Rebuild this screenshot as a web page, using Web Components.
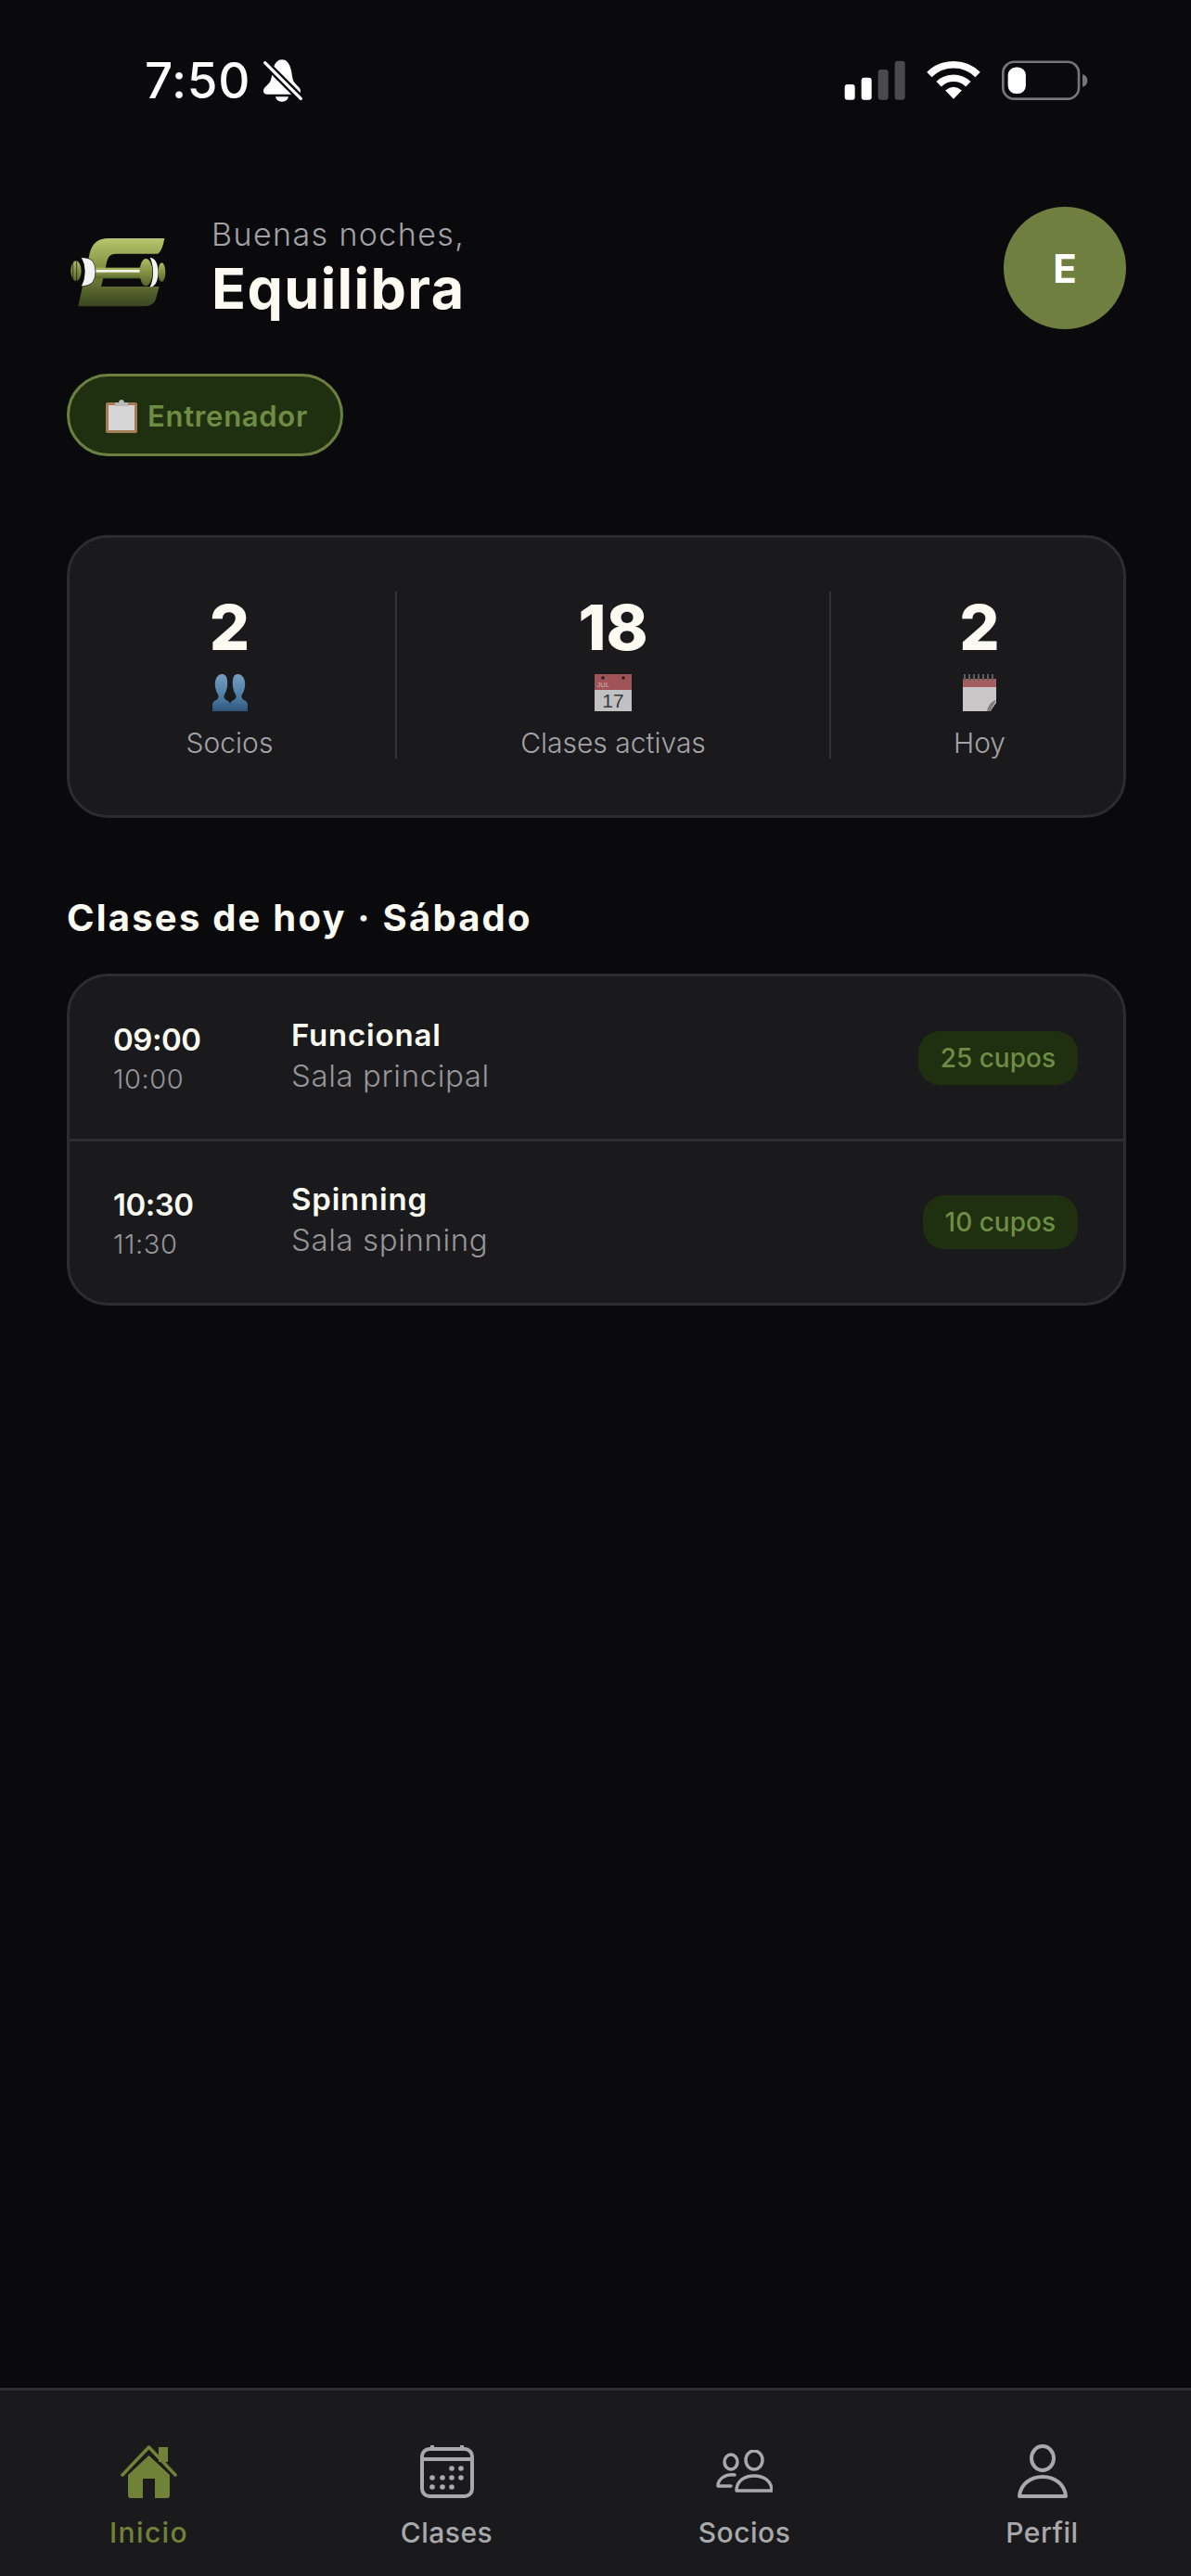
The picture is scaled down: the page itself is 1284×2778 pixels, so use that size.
<!DOCTYPE html>
<html lang="es">
<head>
<meta charset="utf-8">
<title>Equilibra</title>
<style>
    html, body { margin: 0; padding: 0; background: #0a0a0d; }
    body { font-family: Inter, "Liberation Sans", sans-serif; color: #fbfbf2; }
</style>
</head>
<body>
<app-shell>
    <status-bar></status-bar>
    <home-header>
        <span slot="greeting">Buenas noches,</span>
        <span slot="name">Equilibra</span>
        <span slot="initial">E</span>
    </home-header>
    <role-pill>Entrenador</role-pill>
    <stat-card>
        <stat-item icon="busts"><span slot="value">2</span><span slot="label">Socios</span></stat-item>
        <stat-item icon="calendar"><span slot="value">18</span><span slot="label">Clases activas</span></stat-item>
        <stat-item icon="notepad"><span slot="value">2</span><span slot="label">Hoy</span></stat-item>
    </stat-card>
    <section-title>Clases de hoy · Sábado</section-title>
    <class-list>
        <class-row>
            <span slot="start">09:00</span><span slot="end">10:00</span>
            <span slot="name">Funcional</span><span slot="room">Sala principal</span>
            <span slot="spots">25 cupos</span>
        </class-row>
        <class-row>
            <span slot="start">10:30</span><span slot="end">11:30</span>
            <span slot="name">Spinning</span><span slot="room">Sala spinning</span>
            <span slot="spots">10 cupos</span>
        </class-row>
    </class-list>
    <tab-bar>
        <tab-item icon="home" active>Inicio</tab-item>
        <tab-item icon="classes">Clases</tab-item>
        <tab-item icon="members">Socios</tab-item>
        <tab-item icon="profile">Perfil</tab-item>
    </tab-bar>
</app-shell>

<script>
const FONT = 'Inter, "Liberation Sans", sans-serif';

const statIcons = {
    busts: `<svg width="38" height="40" viewBox="0 0 38 40">
        <defs><linearGradient id="b" x1="0" y1="0" x2="0" y2="1"><stop offset="0" stop-color="#86b6dd"/><stop offset=".7" stop-color="#4f86b5"/><stop offset="1" stop-color="#325f88"/></linearGradient></defs>
        <path fill="url(#b)" d="M10.500 0C5.500 0 2.800 5 2.800 11c0 5 2 9 3.700 12 .3 3-1.500 4.500-3.500 5.500C1 29.500 0 31 0 33v7h19v-7c0-2-1-3.500-3-4.500-2-1-3.800-2.500-3.500-5.500 1.700-3 3.700-7 3.700-12C16.200 5 15.500 0 10.500 0z"/>
        <path fill="url(#b)" d="M27.500 0C22.500 0 21.800 5 21.800 11c0 5 2 9 3.700 12 .3 3-1.500 4.500-3.500 5.500-2 1-3 2.500-3 4.500v7h19v-7c0-2-1-3.500-3-4.500-2-1-3.800-2.500-3.500-5.500 1.700-3 3.700-7 3.700-12C35.200 5 32.500 0 27.500 0z"/>
    </svg>`,
    calendar: `<svg width="40" height="40" viewBox="0 0 40 40">
        <rect width="40" height="17" fill="#b85f63"/>
        <rect y="17" width="40" height="23" fill="#dfdfe0"/>
        <circle cx="9" cy="4" r="1.800" fill="#2a2020"/><circle cx="31" cy="4" r="1.800" fill="#2a2020"/>
        <text x="2.500" y="14" font-family="Liberation Sans, sans-serif" font-size="7.500" fill="#eec9c9">JUL</text>
        <text x="20" y="36" text-anchor="middle" font-family="Liberation Sans, sans-serif" font-size="21" fill="#3b3f45">17</text>
    </svg>`,
    notepad: `<svg width="36" height="40" viewBox="0 0 36 40">
        <rect y="5" width="36" height="9" fill="#bd6a6c"/>
        <path d="M0 14h36v17L29 40H0z" fill="#e8e6e6"/>
        <path d="M36 28 C31 29 27 34 26 40h4z" fill="#8f8f8f"/>
        <path d="M36 30 C33 33 31 36 30 40z" fill="#c9c9c9"/>
        <path d="M2 0v7M7 0v7M12 0v7M17 0v7M22 0v7M27 0v7M32 0v7" stroke="#6d6a6c" stroke-width="2"/>
    </svg>`,
};

const tabIcons = {
    home: `<svg width="61" height="58" viewBox="0 0 61 58">
        <rect x="41" y="3" width="10" height="16" fill="currentColor"/>
        <path d="M30.500 12 53 33v22a3 3 0 0 1-3 3H37V37H24v21H11a3 3 0 0 1-3-3V33z" fill="currentColor"/>
        <path d="M2 33 30.500 3 59 33" fill="none" stroke="currentColor" stroke-width="3.500" stroke-linecap="round" stroke-linejoin="round"/>
    </svg>`,
    classes: `<svg width="58" height="58" viewBox="0 0 58 58" fill="none" stroke="currentColor" stroke-width="4">
        <rect x="2" y="5" width="54" height="51" rx="8"/>
        <path d="M2 16h54M13 1v6M45 1v6"/>
        <g fill="currentColor" stroke="none">
            <circle cx="34" cy="26" r="2.800"/><circle cx="44" cy="26" r="2.800"/>
            <circle cx="13" cy="36" r="2.800"/><circle cx="24" cy="36" r="2.800"/><circle cx="34" cy="36" r="2.800"/><circle cx="44" cy="36" r="2.800"/>
            <circle cx="13" cy="46" r="2.800"/><circle cx="24" cy="46" r="2.800"/><circle cx="34" cy="46" r="2.800"/>
        </g>
    </svg>`,
    members: `<svg width="61" height="46" viewBox="0 0 61 46" fill="none" stroke="currentColor" stroke-width="3.500" stroke-linecap="round" stroke-linejoin="round">
        <ellipse cx="16" cy="13" rx="7" ry="8"/>
        <ellipse cx="41" cy="11" rx="9" ry="10"/>
        <path d="M22 44C22 33 31 28 41 28s19 5 19 16z"/>
        <path d="M20 27C10 26 2 31 2 39h14"/>
    </svg>`,
    profile: `<svg width="54" height="58" viewBox="0 0 54 58" fill="none" stroke="currentColor" stroke-width="4" stroke-linejoin="round">
        <ellipse cx="27" cy="15" rx="12" ry="13"/>
        <path d="M2 56C3 43 14 35 27 35s24 8 25 21z"/>
    </svg>`,
};

class AppShell extends HTMLElement {
    constructor() {
        super();
        this.attachShadow({ mode: 'open' }).innerHTML = `
            <style>
                :host { display: flex; flex-direction: column; height: 100vh; min-height: 2778px; box-sizing: border-box; font-family: ${FONT}; }
                ::slotted(tab-bar) { margin-top: auto; }
            </style>
            <slot></slot>`;
    }
}

class StatusBar extends HTMLElement {
    constructor() {
        super();
        this.attachShadow({ mode: 'open' }).innerHTML = `
            <style>
                :host { display: flex; align-items: center; justify-content: space-between; height: 172px; padding: 0 111px 0 156px; box-sizing: border-box; }
                .left, .right { display: flex; align-items: center; }
                .left { gap: 13px; }
                .right { gap: 23px; }
                .time { padding-top: 2px; font: 500 53px ${FONT}; color: #fff; line-height: 1; letter-spacing: .6px; }
                svg { display: block; }
            </style>
            <div class="left">
                <span class="time">7:50</span>
                <svg width="45" height="47" viewBox="482 100 135 141">
                    <path fill="#fff" d="M545 104c-14 0-21 10-26 22-8 20-5 38-14 52-6 9-20 15-20 28 0 7 5 10 12 10h96c7 0 12-3 12-10 0-13-14-19-20-28-9-14-6-32-14-52-5-12-12-22-26-22z"/>
                    <path fill="#fff" d="M524 224h42c-2 10-10 16-21 16s-19-6-21-16z"/>
                    <path d="M484 108l128 128" stroke="#0a0a0d" stroke-width="24"/>
                    <path d="M490 114l116 116" stroke="#fff" stroke-width="10" stroke-linecap="round"/>
                </svg>
            </div>
            <div class="right">
                <svg width="66" height="43" viewBox="95 72 198 129">
                    <rect x="97" y="150" width="33" height="50" rx="9" fill="#fff"/>
                    <rect x="151" y="128" width="33" height="72" rx="9" fill="#fff"/>
                    <rect x="205" y="102" width="33" height="98" rx="9" fill="#4a4a4c"/>
                    <rect x="259" y="74" width="33" height="126" rx="9" fill="#4a4a4c"/>
                </svg>
                <svg width="58" height="42" viewBox="358 74 174 127">
                    <path d="M366 121A112 112 0 0 1 524 121" fill="none" stroke="#fff" stroke-width="23"/>
                    <path d="M397 152A68 68 0 0 1 493 152" fill="none" stroke="#fff" stroke-width="23"/>
                    <path d="M445 200 418 172Q445 150 472 172Z" fill="#fff"/>
                </svg>
                <svg width="93" height="43" viewBox="600 72 280 129">
                    <rect x="604" y="77" width="246" height="120" rx="36" fill="none" stroke="#767678" stroke-width="8"/>
                    <rect x="620" y="94" width="58" height="86" rx="26" fill="#fff"/>
                    <path d="M862 118c10 2 16 10 16 20s-6 18-16 20z" fill="#767678"/>
                </svg>
            </div>`;
    }
}

class HomeHeader extends HTMLElement {
    constructor() {
        super();
        this.attachShadow({ mode: 'open' }).innerHTML = `
            <style>
                :host { display: flex; align-items: center; justify-content: space-between; margin-top: 51px; padding: 0 70px 0 76px; box-sizing: border-box; }
                .who { display: flex; align-items: center; gap: 49px; }
                .logo { display: block; margin-top: 10px; }
                .txt { display: flex; flex-direction: column; }
                .greeting { font-size: 34px; font-weight: 300; line-height: 44px; color: #a3a3a7; letter-spacing: 1.4px; }
                .name { font-size: 61px; font-weight: 700; line-height: 72px; color: #fbfbf2; letter-spacing: 1.4px; }
                .avatar { width: 132px; height: 132px; border-radius: 50%; background: #6f7f3f; display: flex; align-items: center; justify-content: center; font-size: 42px; font-weight: 700; color: #fff; }
            </style>
            <div class="who">
                <svg class="logo" width="103" height="74" viewBox="50 50 310 222">
                    <defs>
                        <linearGradient id="e" x1="0" y1="0" x2="0" y2="1"><stop offset="0" stop-color="#b8c56e"/><stop offset=".45" stop-color="#7e8f40"/><stop offset="1" stop-color="#39451f"/></linearGradient>
                        <linearGradient id="p" x1="0" y1="0" x2="0" y2="1"><stop offset="0" stop-color="#aebb5e"/><stop offset="1" stop-color="#55662c"/></linearGradient>
                    </defs>
                    <path fill="url(#e)" d="M355 50H172Q126 50 113 95L75 270H293Q318 270 326 250L338 206H150L168 125Q173 100 197 100H333Q348 92 355 50Z"/>
                    <rect x="120" y="145" width="170" height="35" fill="url(#p)"/>
                    <rect x="132" y="152" width="165" height="8" fill="#f4f4ea"/>
                    <ellipse cx="68" cy="156" rx="17" ry="33" fill="url(#p)"/>
                    <path d="M58 128V184M70 124V188" stroke="#0a0a0d" stroke-width="2"/>
                    <path d="M84 112q28 0 38 12 9 12 9 34t-9 34q-10 12-38 14 12-20 12-48t-12-46z" fill="#f3f3f3" stroke="#0a0a0d" stroke-width="2"/>
                    <ellipse cx="295" cy="160" rx="21" ry="44" fill="url(#p)"/>
                    <path d="M308 112q26 4 26 48t-26 48q10-22 10-48t-10-48z" fill="#f3f3f3"/>
                    <ellipse cx="346" cy="160" rx="12" ry="31" fill="url(#p)"/>
                </svg>
                <div class="txt">
                    <span class="greeting"><slot name="greeting"></slot></span>
                    <span class="name"><slot name="name"></slot></span>
                </div>
            </div>
            <div class="avatar"><slot name="initial"></slot></div>`;
    }
}

class RolePill extends HTMLElement {
    constructor() {
        super();
        this.attachShadow({ mode: 'open' }).innerHTML = `
            <style>
                :host { display: flex; align-self: flex-start; align-items: center; gap: 11px; height: 89px; margin: 48px 0 0 72px; padding: 2px 35px 0 39px; box-sizing: border-box; border: 3px solid #6b8040; border-radius: 45px; background: #1f3010; color: #6f8c44; font-size: 31px; font-weight: 600; letter-spacing: .7px; }
                svg { display: block; }
            </style>
            <svg width="34" height="36" viewBox="0 0 34 36">
                <rect x="0" y="3" width="34" height="33" rx="2" fill="#a47c55"/>
                <rect x="3" y="6" width="28" height="27" fill="#d6d6d6"/>
                <path d="M10 3h4c0-4 6-4 6 0h4v4H10z" fill="#b9b9b9"/>
            </svg>
            <slot></slot>`;
    }
}

class StatCard extends HTMLElement {
    constructor() {
        super();
        this.attachShadow({ mode: 'open' }).innerHTML = `
            <style>
                :host { display: grid; grid-template-columns: 351px 468px 317px; margin: 85px 70px 0 72px; padding: 58px 0 61px; box-sizing: border-box; background: #1a1a1d; border: 3px solid #2d2d30; border-radius: 44px; }
                ::slotted(stat-item:not(:first-child)) { border-left: 2px solid #333336; }
                ::slotted(stat-item:first-child) { padding-right: 6px; }
                ::slotted(stat-item:last-child) { padding-left: 5px; }
            </style>
            <slot></slot>`;
    }
}

class StatItem extends HTMLElement {
    constructor() {
        super();
        const icon = statIcons[this.getAttribute('icon')] || '';
        this.attachShadow({ mode: 'open' }).innerHTML = `
            <style>
                :host { display: flex; flex-direction: column; align-items: center; height: 180px; box-sizing: border-box; }
                .value { margin-top: -2px; font-size: 68px; font-weight: 800; line-height: 80px; color: #fbfbf2; }
                .icon { height: 40px; margin-top: 11px; opacity: .85; }
                svg { display: block; }
                .label { margin-top: 16px; font-size: 30px; font-weight: 300; line-height: 36px; color: #a3a3a7; }
            </style>
            <span class="value"><slot name="value"></slot></span>
            <div class="icon">${icon}</div>
            <span class="label"><slot name="label"></slot></span>`;
    }
}

class SectionTitle extends HTMLElement {
    constructor() {
        super();
        this.attachShadow({ mode: 'open' }).innerHTML = `
            <style>
                :host { display: block; margin: 83px 70px 0 72px; font-size: 40px; font-weight: 700; line-height: 50px; letter-spacing: 2.200px; color: #fbfbf2; }
            </style>
            <slot></slot>`;
    }
}

class ClassList extends HTMLElement {
    constructor() {
        super();
        this.attachShadow({ mode: 'open' }).innerHTML = `
            <style>
                :host { display: block; margin: 35px 70px 0 72px; box-sizing: border-box; background: #1a1a1d; border: 3px solid #2d2d30; border-radius: 44px; }
                ::slotted(class-row:not(:first-child)) { border-top: 3px solid #2d2d30; }
            </style>
            <slot></slot>`;
    }
}

class ClassRow extends HTMLElement {
    constructor() {
        super();
        this.attachShadow({ mode: 'open' }).innerHTML = `
            <style>
                :host { display: flex; align-items: center; height: 175px; padding: 0 49px 0 47px; box-sizing: border-box; }
                :host(:not(:first-child)) { height: 177px; }
                .time { width: 192px; margin-top: 2px; display: flex; flex-direction: column; }
                .start { font-size: 33px; font-weight: 600; line-height: 42px; letter-spacing: -.5px; color: #fbfbf2; }
                .end { margin-top: 3px; font-size: 29px; font-weight: 300; line-height: 38px; letter-spacing: .6px; color: #96969a; }
                .info { flex: 1; display: flex; flex-direction: column; margin-top: -4px; }
                .name { font-size: 33px; font-weight: 600; line-height: 42px; letter-spacing: .8px; color: #fbfbf2; }
                .room { font-size: 33px; font-weight: 300; line-height: 46px; letter-spacing: .6px; color: #96969a; }
                .spots { display: flex; align-items: center; height: 58px; padding: 0 24px; border-radius: 23px; background: #1f3010; color: #6f8c44; font-size: 28px; font-weight: 500; }
            </style>
            <div class="time">
                <span class="start"><slot name="start"></slot></span>
                <span class="end"><slot name="end"></slot></span>
            </div>
            <div class="info">
                <span class="name"><slot name="name"></slot></span>
                <span class="room"><slot name="room"></slot></span>
            </div>
            <span class="spots"><slot name="spots"></slot></span>`;
    }
}

class TabBar extends HTMLElement {
    constructor() {
        super();
        this.attachShadow({ mode: 'open' }).innerHTML = `
            <style>
                :host { display: grid; grid-template-columns: repeat(4, 321px); height: 203px; box-sizing: border-box; background: #1a1a1d; border-top: 3px solid #2e2e31; }
            </style>
            <slot></slot>`;
    }
}

class TabItem extends HTMLElement {
    constructor() {
        super();
        const icon = tabIcons[this.getAttribute('icon')] || '';
        this.attachShadow({ mode: 'open' }).innerHTML = `
            <style>
                :host { display: flex; flex-direction: column; align-items: center; padding-top: 58px; color: #a9a9ab; font-size: 30px; font-weight: 500; letter-spacing: .5px; }
                :host([active]) { color: #6f8237; letter-spacing: 1.400px; }
                .icon { height: 58px; display: flex; align-items: center; }
                svg { display: block; }
                .label { margin-top: 19px; line-height: 36px; }
            </style>
            <div class="icon">${icon}</div>
            <span class="label"><slot></slot></span>`;
    }
}

customElements.define('app-shell', AppShell);
customElements.define('status-bar', StatusBar);
customElements.define('home-header', HomeHeader);
customElements.define('role-pill', RolePill);
customElements.define('stat-card', StatCard);
customElements.define('stat-item', StatItem);
customElements.define('section-title', SectionTitle);
customElements.define('class-list', ClassList);
customElements.define('class-row', ClassRow);
customElements.define('tab-bar', TabBar);
customElements.define('tab-item', TabItem);
</script>
</body>
</html>
